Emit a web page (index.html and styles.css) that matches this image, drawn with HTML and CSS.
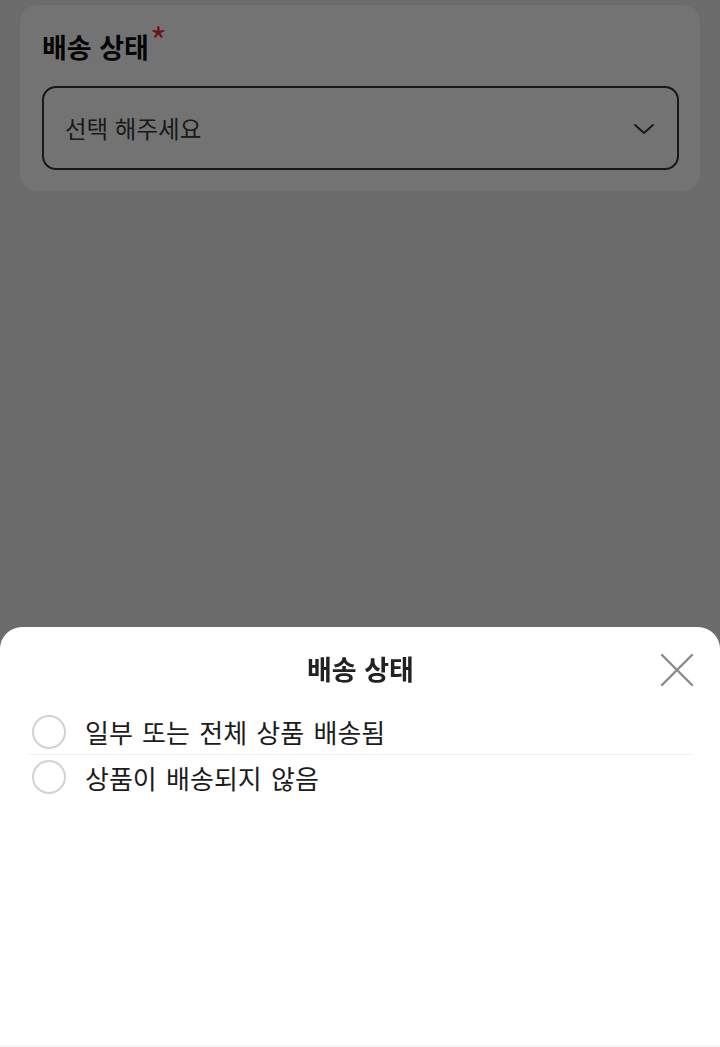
FILE: index.html
```html
<!DOCTYPE html>
<html lang="ko">
<head>
<meta charset="utf-8">
<title>배송 상태</title>
<link rel="stylesheet" href="styles.css">
</head>
<body>
  <main class="page">
    <section class="card">
      <h2 class="field-label">배송 상태<span class="required">*</span></h2>
      <div class="select">
        <span class="select-placeholder">선택 해주세요</span>
        <svg class="chevron" width="22" height="12" viewBox="0 0 22 12" aria-hidden="true">
          <path d="M2 2 L11 10 L20 2" fill="none" stroke="currentColor" stroke-width="2" stroke-linecap="round" stroke-linejoin="round"/>
        </svg>
      </div>
    </section>
  </main>

  <div class="overlay">
    <div class="sheet">
      <header class="sheet-header">
        <h3 class="sheet-title">배송 상태</h3>
        <button class="close" aria-label="닫기">
          <svg width="34" height="34" viewBox="0 0 34 34" aria-hidden="true">
            <path d="M2 2 L32 32 M32 2 L2 32" fill="none" stroke="currentColor" stroke-width="2.4" stroke-linecap="round"/>
          </svg>
        </button>
      </header>
      <ul class="options">
        <li class="option"><span class="radio"></span><span class="option-text">일부 또는 전체 상품 배송됨</span></li>
        <li class="option"><span class="radio"></span><span class="option-text">상품이 배송되지 않음</span></li>
      </ul>
    </div>
  </div>
</body>
</html>
```

FILE: styles.css
```css
* { box-sizing: border-box; }

html, body {
  margin: 0;
  padding: 0;
  height: 100%;
}

body {
  background: #efefef;
  font-family: "Noto Sans CJK KR", "Noto Sans", sans-serif;
  color: #111;
}

.page {
  padding: 5px 20px 0 20px;
}

.card {
  background: #ffffff;
  border-radius: 18px;
  padding: 20px 21px 20px 22px;
  height: 186px;
}

.field-label {
  margin: 0;
  font-size: 27px;
  font-weight: 700;
  line-height: 44px;
  color: #0e0e0e;
  display: flex;
  align-items: flex-start;
}

.required {
  color: #f0322a;
  font-size: 36px;
  font-weight: 400;
  line-height: 1;
  margin-left: 1px;
  margin-top: -4px;
}

.select {
  margin-top: 17px;
  height: 84px;
  border: 2px solid #333;
  border-radius: 14px;
  display: flex;
  align-items: center;
  justify-content: space-between;
  padding: 0 22px 0 21px;
  color: #444;
}

.select-placeholder {
  font-size: 23.5px;
  color: #3a3a3a;
}

.chevron {
  color: #3a3a3a;
  margin-top: 2px;
}

.overlay {
  position: fixed;
  inset: 0;
  background: rgba(0, 0, 0, 0.55);
  display: flex;
  flex-direction: column;
  justify-content: flex-end;
}

.sheet {
  height: 420px;
  background: #ffffff;
  border-radius: 22px 22px 0 0;
  border-bottom: 2px solid #f6f6f6;
  padding: 0 27px 0 28px;
}

.sheet-header {
  height: 82px;
  display: flex;
  align-items: center;
  justify-content: center;
  position: relative;
}

.sheet-title {
  margin: 0;
  font-size: 27px;
  font-weight: 700;
  color: #222;
}

.close {
  position: absolute;
  right: -1px;
  top: 26px;
  background: none;
  border: 0;
  padding: 0;
  color: #8a8a8a;
  display: flex;
}

.options {
  list-style: none;
  margin: 0;
  padding: 0;
}

.option {
  display: flex;
  align-items: center;
  gap: 19px;
  height: 45px;
  padding-left: 4px;
}

.option + .option {
  border-top: 1px solid #f1f1f1;
}

.radio {
  width: 34px;
  height: 34px;
  border-radius: 50%;
  border: 2px solid #d2d2d2;
  flex: none;
}

.option-text {
  font-size: 26px;
  word-spacing: 2px;
  color: #1c1c1c;
}
```
